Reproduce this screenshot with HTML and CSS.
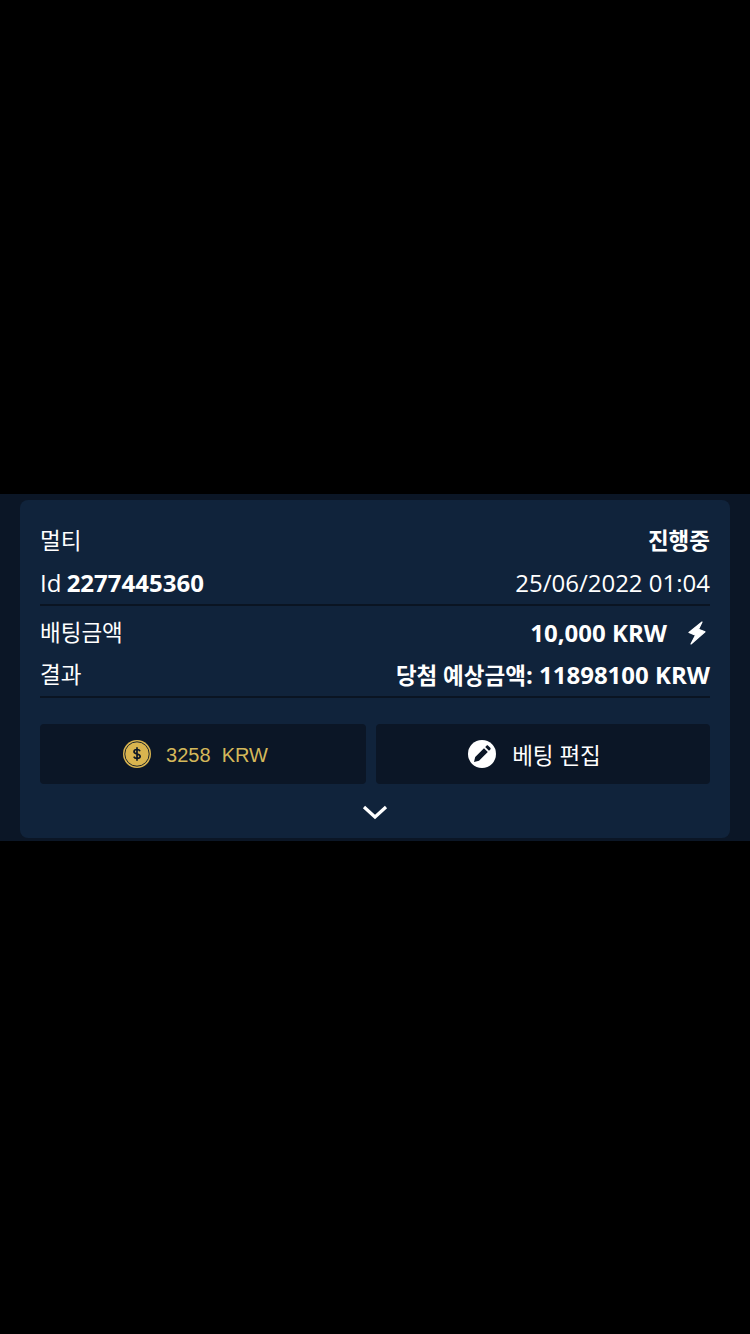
FILE: index.html
```html
<!DOCTYPE html>
<html lang="ko">
<head>
    <meta charset="UTF-8">
    <meta name="viewport" content="width=device-width, initial-scale=1.0">
    <title>베팅 내역</title>
    <link rel="stylesheet" href="styles.css">
</head>
<body>
    <div class="panel">
        <div class="card">
            <div class="row">
                <span class="ko">멀티</span>
                <span class="ko strong">진행중</span>
            </div>
            <div class="row row-ruled">
                <span class="id">Id <b class="strong">2277445360</b></span>
                <span>25/06/2022 01:04</span>
            </div>
            <div class="row row-stake">
                <span class="ko">배팅금액</span>
                <span class="amount">
                    <span class="strong">10,000 KRW</span>
                    <svg class="bolt" viewBox="0 0 18 24" width="18" height="24">
                        <path d="M14 1 1 11.500l6.500 2.700L3 23 17 10.800l-6.500-2.600z" fill="#fff" stroke="#fff" stroke-width="1.200" stroke-linejoin="round"/>
                    </svg>
                </span>
            </div>
            <div class="row row-ruled">
                <span class="ko">결과</span>
                <span class="strong"><span class="ko">당첨 예상금액</span>: 11898100 KRW</span>
            </div>
            <div class="actions">
                <div class="action action-coin">
                    <svg viewBox="0 0 28 28" width="28" height="28">
                        <circle cx="14" cy="14" r="14" fill="#d9b44f"/>
                        <circle cx="14" cy="14" r="12.200" fill="none" stroke="#0b1626" stroke-width=".9"/>
                        <path d="M17 11.200c-.4-1.100-1.500-1.700-3-1.700-1.700 0-3 .8-3 2.200 0 3 6.200 1.500 6.200 4.600 0 1.400-1.400 2.200-3.200 2.200-1.500 0-2.700-.7-3.200-1.900M14 7.200v13.600" fill="none" stroke="#0b1626" stroke-width="1.700"/>
                    </svg>
                    <span class="coin-text">3258&nbsp; KRW</span>
                </div>
                <div class="action action-edit">
                    <svg viewBox="0 0 28 28" width="28" height="28">
                        <circle cx="14" cy="14" r="14" fill="#fff"/>
                        <path d="M6 22l1.200-5 8.800-8.800 3.800 3.800-8.800 8.800zM17.200 7l1.300-1.300c.5-.5 1.200-.5 1.700 0l2.100 2.100c.5.500.5 1.200 0 1.700L21 10.800z" fill="#0b1626"/>
                    </svg>
                    <span class="ko">베팅 편집</span>
                </div>
            </div>
            <div class="toggle">
                <svg viewBox="0 0 26 16" width="26" height="16">
                    <path d="M2 3 13 13 24 3" fill="none" stroke="#fff" stroke-width="3.200"/>
                </svg>
            </div>
        </div>
    </div>
</body>
</html>
```

FILE: styles.css
```css
:root {
    --panel-bg: #0b1626;
    --card-bg: #10233b;
    --rule: #0a1422;
    --gold: #d4b85a;
}

body {
    margin: 0;
    padding-top: 494px;
    min-height: 840px;
    background-color: #000;
    color: #fff;
    font-family: "Open Sans", "Noto Sans CJK KR", sans-serif;
    font-size: 24px;
}

.panel {
    height: 347px;
    padding: 6px 20px 3px;
    box-sizing: border-box;
    background-color: var(--panel-bg);
}

.card {
    height: 338px;
    padding: 20px 20px 0;
    box-sizing: border-box;
    background-color: var(--card-bg);
    border-radius: 8px;
}

.row {
    display: flex;
    justify-content: space-between;
    align-items: center;
    height: 42px;
    line-height: 42px;
    white-space: nowrap;
}

.row-ruled {
    height: 44px;
    border-bottom: 2px solid var(--rule);
    box-sizing: border-box;
}

.row-stake {
    margin-top: 6px;
}

.id {
    word-spacing: -1px;
}

.ko {
    font-size: 22.5px;
}

.strong {
    font-weight: 700;
}

.amount {
    display: flex;
    align-items: center;
    gap: 21px;
    padding-right: 4px;
}

.bolt {
    display: block;
}

.actions {
    display: grid;
    grid-template-columns: 326px 334px;
    gap: 10px;
    margin-top: 26px;
}

.action {
    display: flex;
    justify-content: center;
    align-items: center;
    gap: 16px;
    height: 60px;
    box-sizing: border-box;
    background-color: var(--panel-bg);
    border-radius: 4px;
}

.action-coin {
    gap: 15px;
    padding-right: 15px;
    color: var(--gold);
}

.action-edit {
    padding-right: 17px;
}

.coin-text {
    padding-top: 2px;
    font-family: "Liberation Sans", sans-serif;
    font-size: 20px;
}

.toggle {
    display: flex;
    justify-content: center;
    padding-top: 20px;
}
```
